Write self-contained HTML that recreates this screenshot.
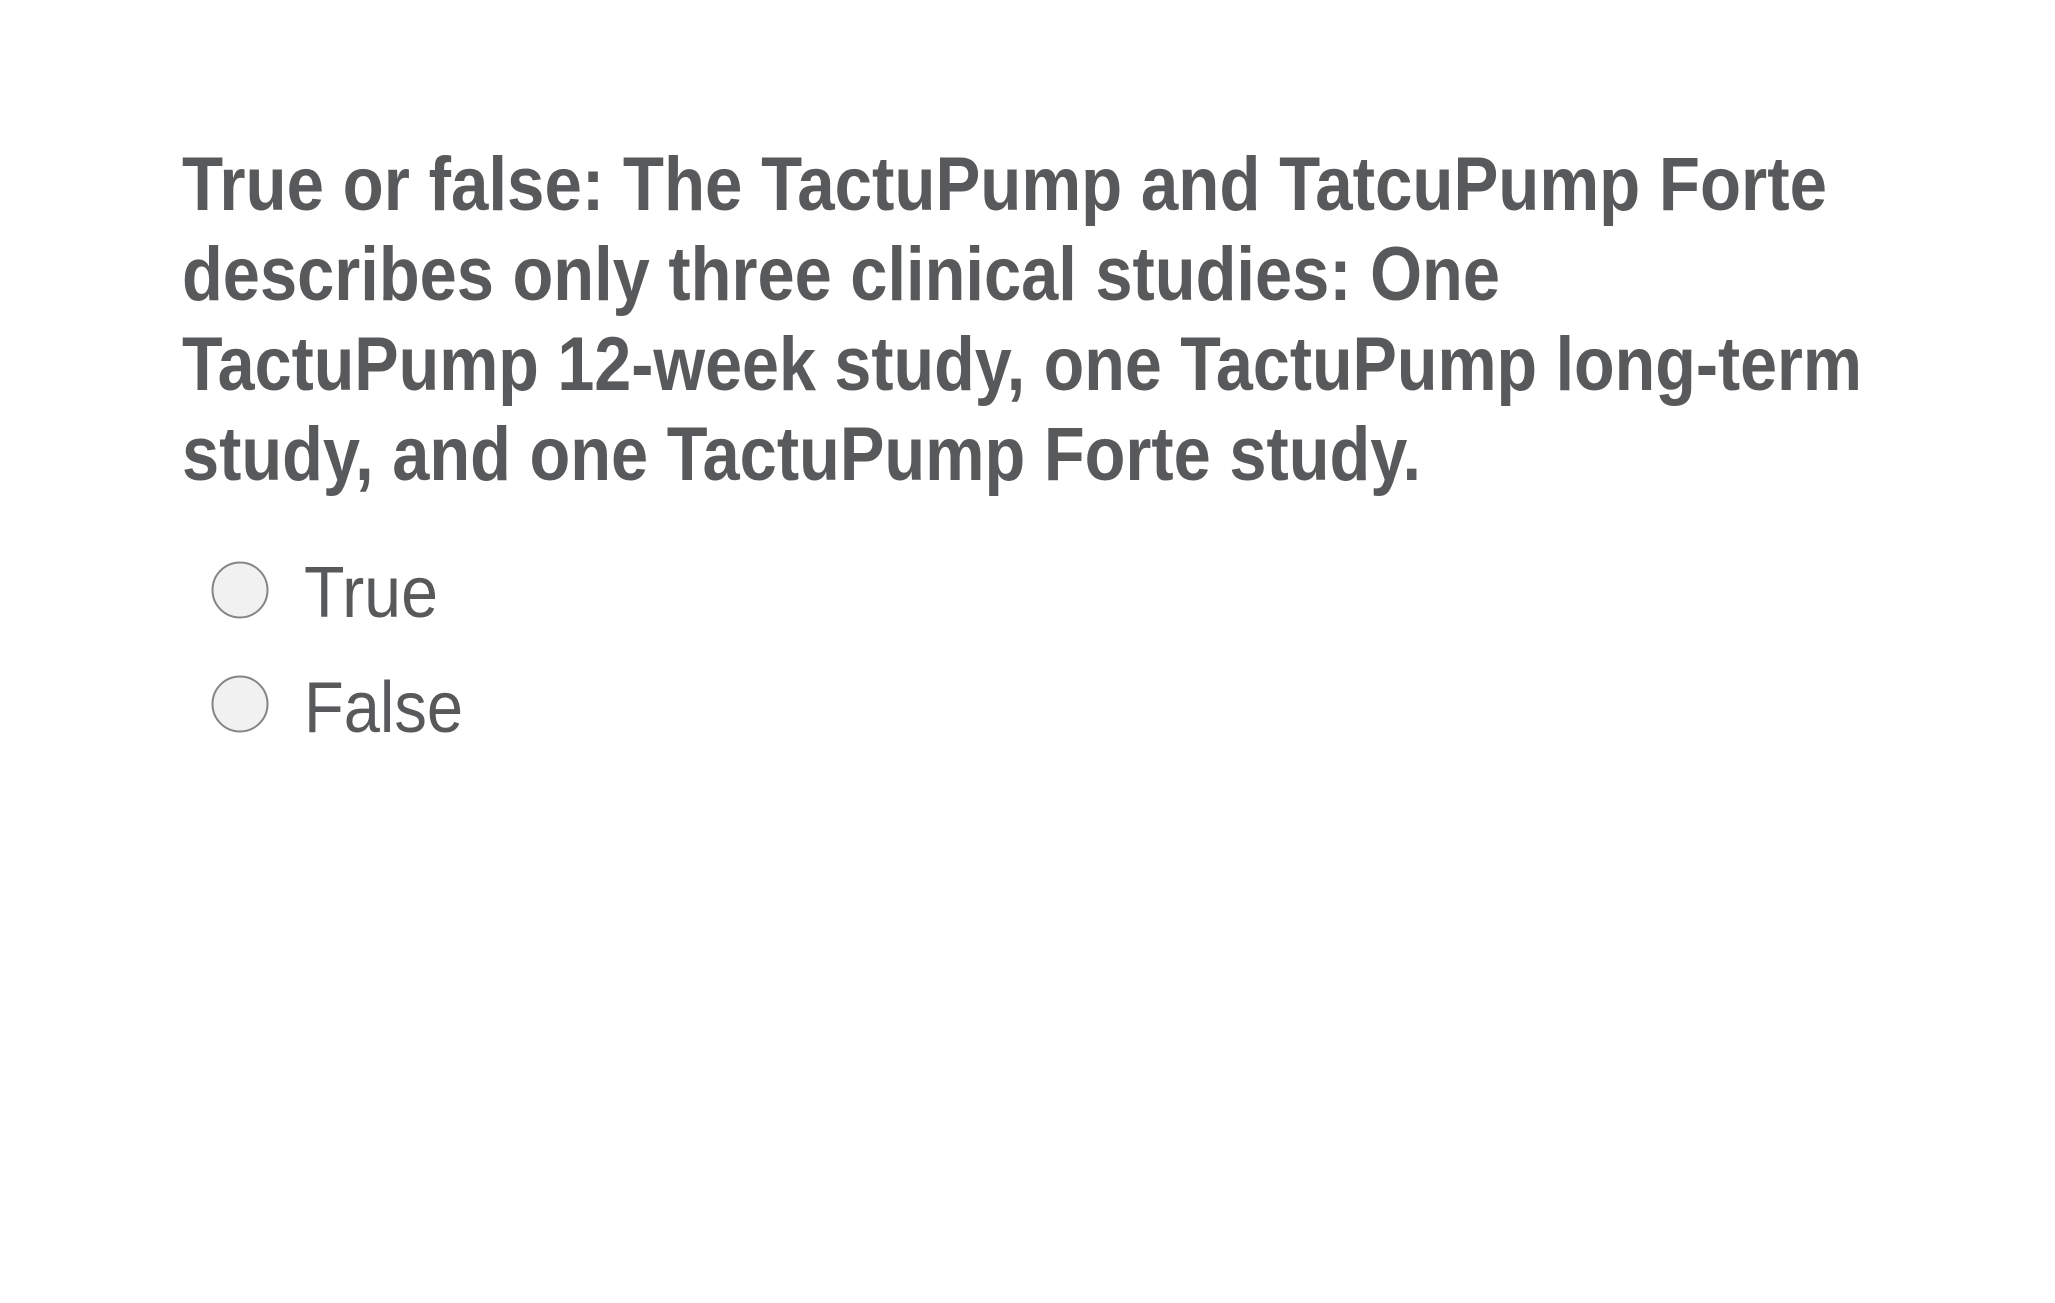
<!DOCTYPE html>
<html><head><meta charset="utf-8"><style>
html,body{margin:0;padding:0;background:#fff;width:2055px;height:1303px;overflow:hidden}
svg{display:block}
</style></head><body>
<svg width="2055" height="1303" viewBox="0 0 2055 1303" xmlns="http://www.w3.org/2000/svg">
<g font-family="Liberation Sans, sans-serif" font-weight="bold" font-size="76" fill="#58595b">
<text x="182" y="210" textLength="1645" lengthAdjust="spacingAndGlyphs">True or false: The TactuPump and TatcuPump Forte</text>
<text x="182" y="300" textLength="1318" lengthAdjust="spacingAndGlyphs">describes only three clinical studies: One</text>
<text x="182" y="390" textLength="1680" lengthAdjust="spacingAndGlyphs">TactuPump 12-week study, one TactuPump long-term</text>
<text x="182" y="480" textLength="1239" lengthAdjust="spacingAndGlyphs">study, and one TactuPump Forte study.</text>
</g>
<circle cx="240" cy="590" r="27.5" fill="#f0f1f0" stroke="#858585" stroke-width="2"/>
<circle cx="240" cy="704" r="27.5" fill="#f0f1f0" stroke="#858585" stroke-width="2"/>
<g font-family="Liberation Sans, sans-serif" font-size="72" fill="#58595b">
<text x="304" y="617" textLength="134" lengthAdjust="spacingAndGlyphs">True</text>
<text x="304" y="732" textLength="159" lengthAdjust="spacingAndGlyphs">False</text>
</g>
</svg>
</body></html>
